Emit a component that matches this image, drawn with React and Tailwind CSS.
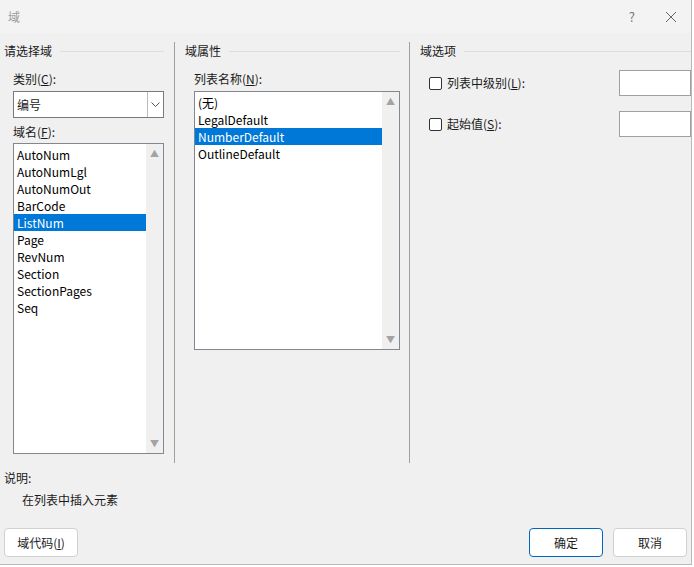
import React from 'react'

const font = { fontFamily: '"Microsoft YaHei","Noto Sans CJK SC","Noto Sans",sans-serif' }

function ScrollList({ items, selected, className }) {
  return (
    <div className={"flex border border-[#828790] bg-white " + className}>
      <div className="flex-1 pt-[2px]">
        {items.map((it) => (
          <div key={it} className={"h-[17px] pl-[3px] leading-[17px] text-[12px] " + (it === selected ? "bg-[#0078d7] text-white" : "text-black")}>{it}</div>
        ))}
      </div>
      <div className="flex w-[17px] flex-col items-center justify-between bg-[#f0f0f0] py-[5px]">
        <span className="text-[9px] leading-none text-[#a3a3a3]">▲</span>
        <span className="text-[9px] leading-none text-[#a3a3a3]">▼</span>
      </div>
    </div>
  )
}

function GroupHead({ title, width }) {
  return (
    <div className="flex items-center gap-2" style={{ width }}>
      <span className="text-[12px]">{title}</span>
      <div className="h-px flex-1 bg-[#dcdcdc]" />
    </div>
  )
}

function Check({ label, u }) {
  return (
    <div className="flex items-center gap-[5px] text-[12px]">
      <div className="h-[13px] w-[13px] rounded-[2px] border border-[#333] bg-white" />
      <span>{label}(<u>{u}</u>):</span>
    </div>
  )
}

export default function App() {
  return (
    <div style={font} className="h-[567px] w-[694px] overflow-hidden bg-white text-[#1a1a1a]">
      <div className="flex h-[565px] w-[692px] flex-col border-r border-b border-[#b9b9b9] bg-[#f0f0f0]">
        <div className="flex h-[33px] items-center justify-between bg-[#f3f3f3] pl-[8px] pr-[14px]">
          <span className="text-[12px] text-[#9b9b9b]">域</span>
          <div className="flex items-center gap-[30px] text-[#777]">
            <span className="text-[13px]">?</span>
            <svg width="12" height="12" viewBox="0 0 12 12" stroke="#666" strokeWidth="1"><path d="M1 1L11 11M11 1L1 11" /></svg>
          </div>
        </div>
        <div className="flex h-[430px] pt-[9px]">
          <div className="flex w-[175px] flex-col border-r border-[#a0a0a0] pl-[4px] pr-[10px]">
            <GroupHead title="请选择域" />
            <div className="mt-[10px] pl-[9px] text-[12px]">类别(<u>C</u>):</div>
            <div className="ml-[9px] mt-[3px] flex h-[27px] border border-[#7a7a7a] bg-white">
              <span className="flex-1 pl-[3px] text-[12px] leading-[25px]">编号</span>
              <div className="flex w-[16px] items-center justify-center border-l border-[#bbb]">
                <svg width="9" height="5" viewBox="0 0 9 5" fill="none" stroke="#555"><path d="M0.5 0.5L4.5 4.5L8.5 0.5" /></svg>
              </div>
            </div>
            <div className="mt-[5px] pl-[9px] text-[12px]">域名(<u>F</u>):</div>
            <ScrollList className="ml-[9px] mt-[2px] h-[311px]" selected="ListNum"
              items={["AutoNum","AutoNumLgl","AutoNumOut","BarCode","ListNum","Page","RevNum","Section","SectionPages","Seq"]} />
          </div>
          <div className="flex w-[235px] flex-col border-r border-[#a0a0a0] pl-[10px] pr-[9px]">
            <GroupHead title="域属性" />
            <div className="mt-[10px] pl-[9px] text-[12px]">列表名称(<u>N</u>):</div>
            <ScrollList className="ml-[9px] mt-[3px] h-[259px]" selected="NumberDefault"
              items={["(无)","LegalDefault","NumberDefault","OutlineDefault"]} />
          </div>
          <div className="flex flex-1 flex-col pl-[10px]">
            <GroupHead title="域选项" />
            <div className="mt-[10px] flex items-center justify-between pl-[9px]">
              <Check label="列表中级别" u="L" />
              <div className="h-[26px] w-[72px] border border-[#a0a0a0] bg-white" />
            </div>
            <div className="mt-[15px] flex items-center justify-between pl-[9px]">
              <Check label="起始值" u="S" />
              <div className="h-[26px] w-[72px] border border-[#a0a0a0] bg-white" />
            </div>
          </div>
        </div>
        <div className="pl-[4px] pt-[6px] text-[12px]">说明:</div>
        <div className="pl-[22px] pt-[4px] text-[12px]">在列表中插入元素</div>
        <div className="mt-[19px] flex px-[4px]">
          <button className="h-[29px] w-[74px] rounded-[4px] border border-[#d0d0d0] bg-white text-[12px]">域代码(<u>I</u>)</button>
          <div className="flex-1" />
          <button className="h-[29px] w-[74px] rounded-[4px] border border-[#0067c0] bg-white text-[12px]">确定</button>
          <button className="ml-[10px] h-[29px] w-[74px] rounded-[4px] border border-[#d0d0d0] bg-white text-[12px]">取消</button>
        </div>
      </div>
    </div>
  )
}
